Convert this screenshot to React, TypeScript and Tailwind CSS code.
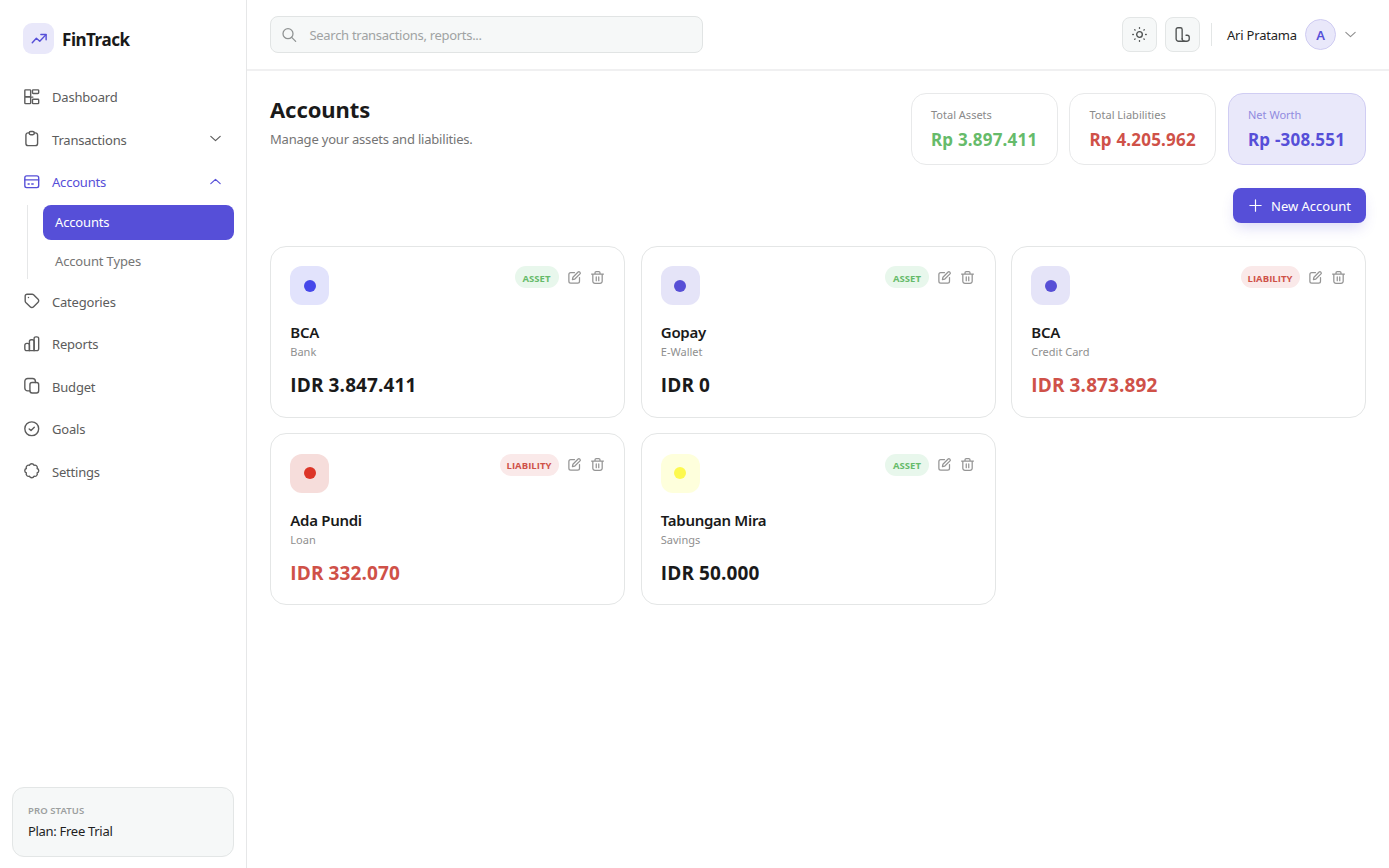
import type { ReactNode } from 'react';

const paths: Record<string, ReactNode> = {
  trend: <><path d="M3 17l5.500-6 4.500 4 8-8.500" /><path d="M14.500 6H21.500v7" /></>,
  dashboard: <><rect x="2.500" y="2.500" width="8" height="9.500" rx="1" /><rect x="2.500" y="12" width="8" height="9.500" rx="1" /><rect x="13" y="2.500" width="8.500" height="5" rx="1" /><rect x="13" y="15.500" width="8.500" height="6" rx="1" /><path d="M10.500 12.500h3" /></>,
  clipboard: <><path d="M8.500 4H7a3 3 0 0 0-3 3v11.500a3 3 0 0 0 3 3h10a3 3 0 0 0 3-3V7a3 3 0 0 0-3-3h-1.500" /><rect x="8.500" y="2" width="7" height="4.500" rx="2" /></>,
  card: <><rect x="2.500" y="4" width="19" height="16" rx="2.500" /><path d="M2.500 9.500h19M7 15h1.500M12 15h2" /></>,
  tag: <><path d="M3 5.500A2.500 2.500 0 0 1 5.500 3h7a3 3 0 0 1 2 .8l6.200 6.200a2.800 2.800 0 0 1 0 4l-6.500 6.500a2.800 2.800 0 0 1-4 0l-6.400-6.200a3 3 0 0 1-.8-2z" /><path d="M7.500 7.500h.01" /></>,
  chart: <><path d="M8.800 21.500H5A2.500 2.500 0 0 1 2.500 19v-5A2.500 2.500 0 0 1 5 11.500h1.300A2.500 2.500 0 0 1 8.800 14z" /><path d="M8.800 21.500V9a2.500 2.500 0 0 1 2.500-2.500h1.400A2.500 2.500 0 0 1 15.200 9v12.500z" /><path d="M15.200 21.500V5a2.500 2.500 0 0 1 2.500-2.500H19A2.500 2.500 0 0 1 21.500 5v14a2.500 2.500 0 0 1-2.500 2.500z" /></>,
  copy: <><rect x="9.500" y="7.500" width="12" height="14.500" rx="3" /><path d="M9.500 19H6.500a4 4 0 0 1-4-4V6a4 4 0 0 1 4-4H13a4 4 0 0 1 4 4v1.500" /></>,
  check: <><circle cx="12" cy="12" r="9.500" /><path d="M8.500 12.200l2.500 2.300 4.500-4.500" /></>,
  badge: <path d="M8.900 4.600A3.300 3.300 0 0 1 15.100 4.600A3.300 3.300 0 0 1 19.400 8.900A3.300 3.300 0 0 1 19.400 15.100A3.300 3.300 0 0 1 15.100 19.400A3.300 3.300 0 0 1 8.900 19.400A3.300 3.300 0 0 1 4.600 15.100A3.300 3.300 0 0 1 4.600 8.900A3.300 3.300 0 0 1 8.900 4.600z" />,
  down: <path d="M4.500 8.500l7.500 7 7.500-7" />,
  up: <path d="M4.500 15.500l7.500-7 7.500 7" />,
  search: <><circle cx="10.500" cy="10" r="7.500" /><path d="M16 15.500l6 6" /></>,
  sun: <><circle cx="12" cy="12" r="4" /><path d="M12 2.500v.8M12 20.700v.8M2.500 12h.8M20.700 12h.8M5.300 5.300l.5.5M18.200 18.200l.5.5M5.300 18.700l.5-.5M18.200 5.800l.5-.5" /></>,
  layout: <><path d="M11.500 18.500V5A2.500 2.500 0 0 0 9 2.500H5.500A2.500 2.500 0 0 0 3 5v13a3.500 3.500 0 0 0 3.500 3.500H18.500a3 3 0 0 0 3-3V16a3 3 0 0 0-3-3H17" /><path d="M11.500 18a3.500 3.500 0 0 0 3.500 3.500" /></>,
  plus: <path d="M12 3v18M3 12h18" />,
  edit: <><path d="M12 4H6a3 3 0 0 0-3 3v11a3 3 0 0 0 3 3h11a3 3 0 0 0 3-3v-6" /><path d="M9.500 11.500l8.300-8.300a1.700 1.700 0 0 1 2.400 0l.6.6a1.700 1.700 0 0 1 0 2.400l-8.300 8.300-3.800.8z" /></>,
  trash: <><path d="M2.500 6.500h19M4.500 6.500V18a3.500 3.500 0 0 0 3.500 3.500h8a3.500 3.500 0 0 0 3.500-3.500V6.500M8 6.500V4.500a2 2 0 0 1 2-2h4a2 2 0 0 1 2 2v2M10 11v6M14 11v6" /></>,
};

function Icon({ name, size = 18, stroke = 1.9, className = '' }: { name: string; size?: number; stroke?: number; className?: string }) {
  return (
    <svg width={size} height={size} viewBox="0 0 24 24" fill="none" stroke="currentColor" strokeWidth={stroke}
      strokeLinecap="round" strokeLinejoin="round" className={`shrink-0 ${className}`}>
      {paths[name]}
    </svg>
  );
}

function NavItem({ icon, label, arrow, active }: { icon: string; label: string; arrow?: string; active?: boolean }) {
  return (
    <a href="#" className={`flex h-[38.500px] items-center pl-[11px] pr-[11.500px] ${active ? 'text-[#564fd8]' : 'text-[#5c5c5c]'}`}>
      <Icon name={icon} size={17.5} className="mb-[2px]" />
      <span className="ml-[11.500px] flex-1 pt-px text-[13px] tracking-[-0.2px]">{label}</span>
      {arrow && <Icon name={arrow} size={15} className="mb-[2px]" />}
    </a>
  );
}

const stats = [
  { label: 'Total Assets', value: 'Rp 3.897.411', box: 'w-[147px] border-[#e8e9ea] bg-white', labelColor: 'text-[#8a8a8a]', valueColor: 'text-[#66bb6a]' },
  { label: 'Total Liabilities', value: 'Rp 4.205.962', box: 'w-[147px] border-[#e8e9ea] bg-white', labelColor: 'text-[#8a8a8a]', valueColor: 'text-[#cf5148]' },
  { label: 'Net Worth', value: 'Rp -308.551', box: 'w-[138.500px] border-[#d0cdf3] bg-[#e9e8fa]', labelColor: 'text-[#918bdf]', valueColor: 'text-[#564fd8]' },
];

const accounts = [
  { name: 'BCA', type: 'Bank', amount: 'IDR 3.847.411', liability: false, tile: 'bg-[#e2e3fc]', dot: 'bg-[#4648ea]' },
  { name: 'Gopay', type: 'E-Wallet', amount: 'IDR 0', liability: false, tile: 'bg-[#e5e4f8]', dot: 'bg-[#574fd6]' },
  { name: 'BCA', type: 'Credit Card', amount: 'IDR 3.873.892', liability: true, tile: 'bg-[#e5e4f8]', dot: 'bg-[#574fd6]' },
  { name: 'Ada Pundi', type: 'Loan', amount: 'IDR 332.070', liability: true, tile: 'bg-[#f6dddb]', dot: 'bg-[#dc3528]' },
  { name: 'Tabungan Mira', type: 'Savings', amount: 'IDR 50.000', liability: false, tile: 'bg-[#feffdc]', dot: 'bg-[#fdf94e]' },
];

function Sidebar() {
  return (
    <aside className="flex w-[247px] shrink-0 flex-col border-r border-[#e6e7e8] pb-[11px] pl-[12px] pr-[12px]">
      <div className="flex items-center gap-[8px] pl-[11px] pt-[23px]">
        <div className="flex size-[31px] items-center justify-center rounded-[9px] bg-[#e9e8fa] text-[#564fd8]">
          <Icon name="trend" size={18} />
        </div>
        <span className="pt-[2px] text-[17px] font-bold tracking-[-0.45px] text-[#1a1a1a]">FinTrack</span>
      </div>
      <nav className="mt-[24px] flex flex-col gap-[4px]">
        <NavItem icon="dashboard" label="Dashboard" />
        <NavItem icon="clipboard" label="Transactions" arrow="down" />
        <div>
          <NavItem icon="card" label="Accounts" arrow="up" active />
          <div className="ml-[15px] mt-[3px] flex flex-col gap-[4px] border-l border-[#e6e7e8] pl-[15px] text-[13px] tracking-[-0.15px]">
            <a href="#" className="flex h-[35px] items-center rounded-[8px] bg-[#564fd8] pl-[12px] pt-[2px] text-white">Accounts</a>
            <a href="#" className="flex h-[35px] items-center pl-[12px] pt-[2px] text-[#757575]">Account Types</a>
          </div>
        </div>
        <NavItem icon="tag" label="Categories" />
        <NavItem icon="chart" label="Reports" />
        <NavItem icon="copy" label="Budget" />
        <NavItem icon="check" label="Goals" />
        <NavItem icon="badge" label="Settings" />
      </nav>
      <div className="mt-auto flex h-[70px] flex-col justify-center rounded-[12px] border border-[#e3e6e6] bg-[#f6f8f8] pl-[15px] pt-px">
        <span className="text-[9.500px] font-semibold leading-[17px] tracking-[0.1px] text-[#9c9f9f]">PRO STATUS</span>
        <span className="text-[13px] leading-[25px] tracking-[-0.3px] text-[#1f1f1f]">Plan: Free Trial</span>
      </div>
    </aside>
  );
}

function Header() {
  return (
    <header className="flex h-[71px] items-center border-b-2 border-[#f0f0f1] pl-[23px] pr-[31px]">
      <div className="flex h-[37px] w-[433px] items-center rounded-[8px] border border-[#e1e4e4] bg-[#f6f8f8] pl-[10px]">
        <Icon name="search" size={16} className="text-[#8f9292]" />
        <span className="ml-[12.500px] pt-[2px] text-[13px] tracking-[-0.3px] text-[#a0a3a3]">Search transactions, reports...</span>
      </div>
      <div className="ml-auto flex items-center">
        <button className="flex size-[35px] items-center justify-center rounded-[8px] border border-[#e3e6e6] bg-[#f6f8f8] text-[#4f5252]">
          <Icon name="sun" size={17} />
        </button>
        <button className="ml-[8px] flex size-[35px] items-center justify-center rounded-[8px] border border-[#e3e6e6] bg-[#f6f8f8] text-[#4f5252]">
          <Icon name="layout" size={17} />
        </button>
        <div className="ml-[11px] h-[23px] w-px bg-[#e3e6e6]" />
        <span className="ml-[15px] w-[70px] whitespace-nowrap pt-[2px] text-[13px] tracking-[-0.2px] text-[#1f1f1f]">Ari Pratama</span>
        <div className="ml-[8px] flex size-[31px] items-center justify-center rounded-full border border-[#cfccf2] bg-[#e9e8fa] pt-[2px] text-[13px] font-semibold text-[#564fd8]">A</div>
        <Icon name="down" size={15} stroke={1.7} className="ml-[7px] text-[#8d8d8d]" />
      </div>
    </header>
  );
}

export default function App() {
  return (
    <div className="flex h-[868px] w-[1389px] overflow-hidden bg-white font-['Noto_Sans',sans-serif]">
      <Sidebar />
      <div className="flex-1">
        <Header />
        <main className="px-[23px] pt-[22px]">
          <div className="flex justify-between">
            <div>
              <h1 className="text-[22px] font-bold leading-[33px] tracking-[-0.1px] text-[#1a1a1a]">Accounts</h1>
              <p className="mt-px text-[13px] leading-[24px] tracking-[-0.2px] text-[#757575]">Manage your assets and liabilities.</p>
            </div>
            <div className="flex gap-[11.500px]">
              {stats.map(s => (
                <div key={s.label} className={`flex h-[72px] flex-col rounded-[15px] border pl-[19.500px] pt-[11px] whitespace-nowrap ${s.box}`}>
                  <span className={`text-[11px] leading-[20px] ${s.labelColor}`}>{s.label}</span>
                  <span className={`text-[17px] font-bold leading-[30px] tracking-[0.2px] ${s.valueColor}`}>{s.value}</span>
                </div>
              ))}
            </div>
          </div>
          <div className="mt-[23px] flex justify-end">
            <button className="flex h-[35px] w-[133.500px] items-center rounded-[8px] bg-[#564fd8] pl-[15.500px] text-[13px] text-white shadow-[0_7px_14px_-3px_rgba(86,79,216,0.22)]">
              <Icon name="plus" size={15} className="mb-px" />
              <span className="ml-[8px] whitespace-nowrap pt-[2px]">New Account</span>
            </button>
          </div>
          <div className="mt-[23px] grid grid-cols-3 gap-x-[15.500px] gap-y-[15.700px]">
            {accounts.map(a => (
              <div key={a.name + a.type} className="h-[171.500px] rounded-[16px] border border-[#e4e6e6] bg-white pl-[19.300px] pr-[19.500px] pt-[19.400px]">
                <div className="flex items-start">
                  <div className={`flex size-[39px] items-center justify-center rounded-[12px] ${a.tile}`}>
                    <div className={`size-[12px] rounded-full ${a.dot}`} />
                  </div>
                  <div className="ml-auto flex h-[22px] items-center text-[#959595]">
                    <span className={`flex h-[22px] items-center justify-center rounded-full pt-[3px] font-['Open_Sans',sans-serif] text-[9.500px] font-bold tracking-[0.05px] ${
                      a.liability ? 'w-[59px] bg-[#fae9e9] text-[#cf5148]' : 'w-[44px] bg-[#e8f7ec] text-[#66bb6a]'
                    }`}>
                      {a.liability ? 'LIABILITY' : 'ASSET'}
                    </span>
                    <Icon name="edit" size={15} stroke={2} className="ml-[8px]" />
                    <Icon name="trash" size={15} stroke={2} className="ml-[8px]" />
                  </div>
                </div>
                <h3 className="mt-[16px] text-[15px] font-semibold leading-[22px] tracking-[-0.3px] text-[#1a1a1a]">{a.name}</h3>
                <p className="mt-px text-[11px] leading-[16px] text-[#8f8f8f]">{a.type}</p>
                <p className={`mt-[11px] font-['Open_Sans',sans-serif] text-[19px] font-bold leading-[29px] tracking-[0.12px] ${a.liability ? 'text-[#cf5148]' : 'text-[#1a1a1a]'}`}>{a.amount}</p>
              </div>
            ))}
          </div>
        </main>
      </div>
    </div>
  );
}
